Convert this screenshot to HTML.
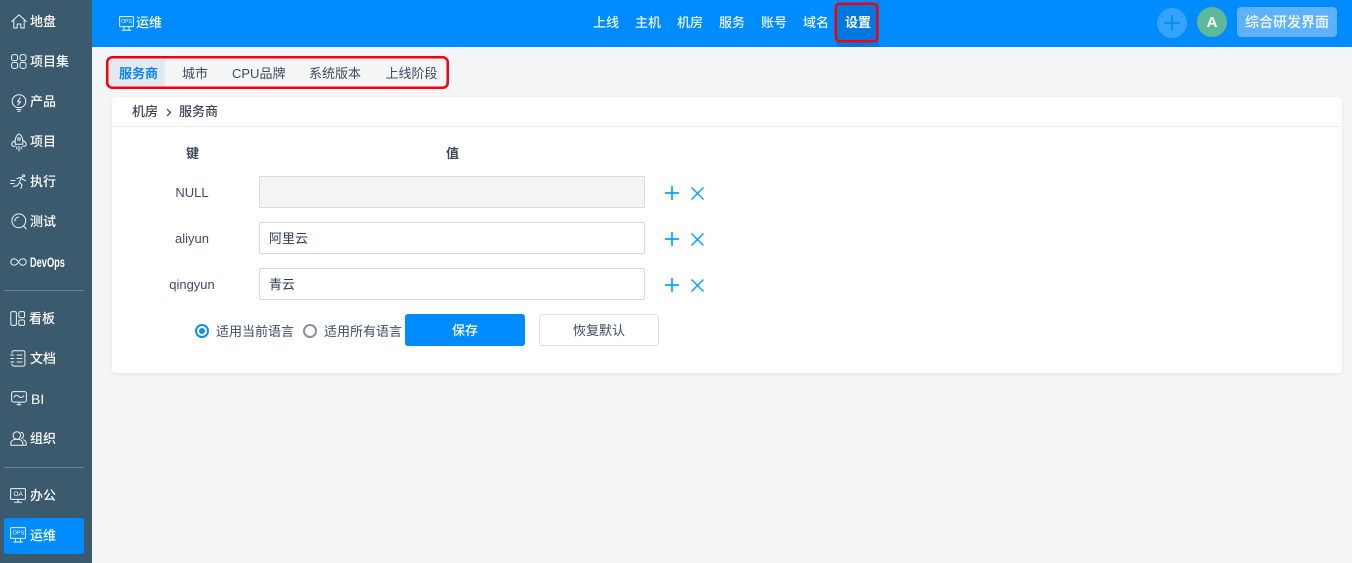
<!DOCTYPE html>
<html lang="zh">
<head>
<meta charset="utf-8">
<style>
html,body{margin:0;padding:0}
body{width:1352px;height:563px;overflow:hidden;position:relative;background:#f3f5f7;font-family:"Liberation Sans","Noto Sans CJK SC",sans-serif;font-size:13px;color:#313c52}
div,span{position:absolute;box-sizing:border-box;white-space:nowrap}
svg{position:absolute;overflow:visible}
.side{left:0;top:0;width:92px;height:563px;background:#3c5a6e}
.sl{left:30px;color:#fff;line-height:20px;height:20px;font-size:13px;font-weight:500}
.sep{left:4px;width:80px;height:1px;background:#6c8296}
.ic{fill:none;stroke:#eef3f6;stroke-width:1;stroke-linecap:round;stroke-linejoin:round}
.top{left:92px;top:0;width:1260px;height:47px;background:#008cff}
.nav{top:13px;line-height:20px;color:#fff;font-size:13px;font-weight:500;opacity:.93}
.tab{top:64px;line-height:20px;font-size:13px;color:#3f4b60}
.lbl{line-height:20px;text-align:center;width:80px;left:152px;color:#3f4b60}
.inp{left:259px;width:386px;height:32px;border:1px solid #d9d9d9;border-radius:2px;background:#fff;padding-left:9px;line-height:32px;color:#313c52}
.rb{top:324px;line-height:16px;font-size:13px;color:#3f4b60}
.act{fill:none;stroke:#00a7ff;stroke-width:1.7}
</style>
</head>
<body>
<div class="side"></div>

<svg class="ic" style="left:11px;top:14px" width="16" height="15" viewBox="0 0 16 15"><path d="M.7 7.500 8 .8l7.300 6.700M2.800 6v8h3.400v-4h3.600v4h3.400V6"/></svg>
<div class="sl" style="top:12px">地盘</div>

<svg class="ic" style="left:11px;top:54px" width="16" height="15" viewBox="0 0 16 15"><rect x=".6" y=".6" width="6" height="6" rx="2"/><rect x="9" y=".6" width="6" height="6" rx="2"/><rect x=".6" y="8.400" width="6" height="6" rx="2"/><rect x="9" y="8.400" width="6" height="6" rx="2"/></svg>
<div class="sl" style="top:52px">项目集</div>

<svg class="ic" style="left:11px;top:94px" width="16" height="18" viewBox="0 0 16 18"><path d="M5.500 13.500C3 12.300 1.200 10.200 1.200 7.300 1.200 3.600 4.200.8 8 .8s6.800 2.800 6.800 6.500c0 2.900-1.800 5-4.300 6.200zM6 15.500h4M6.800 17.300h2.400M9.300 3.800 6.500 7.800h3L6.800 11"/></svg>
<div class="sl" style="top:92px">产品</div>

<svg class="ic" style="left:11px;top:133px" width="16" height="19" viewBox="0 0 16 19"><path d="M8 .8c2.700 1.800 3.800 4.200 3.800 7v3.400H4.200V7.800C4.200 5 5.300 2.600 8 .8zM4.200 7.500C2 8.500.8 10 .8 11.500c0 1 .8 1.700 1.800 1.700h1.600M11.800 7.500c2.200 1 3.400 2.500 3.400 4 0 1-.8 1.700-1.800 1.700h-1.600M8 13.500v4.500M5.800 14v2M10.200 14v2"/><circle cx="8" cy="6" r="1.300"/></svg>
<div class="sl" style="top:132px">项目</div>

<svg class="ic" style="left:10px;top:174px" width="18" height="15" viewBox="0 0 18 15"><circle cx="13.500" cy="1.800" r="1.100"/><path d="M7 4.500 11 3.300l1.800 2.200 3 1.200M11 4 9.500 8.500l2.500 2-1 4M9.500 8.500 7.500 11.500 3.500 12.500M1 6.500h4M.5 9.500h3.500"/></svg>
<div class="sl" style="top:172px">执行</div>

<svg class="ic" style="left:11px;top:213px" width="16" height="17" viewBox="0 0 16 17"><circle cx="7.800" cy="7.800" r="6.900"/><path d="M12.500 12.800 15.200 16M3.800 8a4 4 0 0 1 4-4"/></svg>
<div class="sl" style="top:212px">测试</div>

<svg class="ic" style="left:10px;top:258px" width="17" height="8" viewBox="0 0 17 8"><path d="M8.500 4C7.200 2 5.800.8 4 .8 2.200.8.800 2.200.8 4S2.200 7.200 4 7.200C5.800 7.200 7.200 6 8.500 4c1.300-2 2.700-3.200 4.500-3.200 1.800 0 3.200 1.400 3.200 3.200S14.800 7.200 13 7.200C11.200 7.200 9.800 6 8.500 4z"/></svg>
<div class="sl" style="top:252px;font-size:14px;font-weight:700;transform:scaleX(.66);transform-origin:0 50%">DevOps</div>

<div class="sep" style="top:290px"></div>

<svg class="ic" style="left:10px;top:311px" width="16" height="15" viewBox="0 0 16 15"><rect x=".8" y=".6" width="5.600" height="13.800" rx="1.500"/><rect x="8.800" y=".6" width="5.800" height="6" rx="1.500"/><rect x="8.800" y="9" width="5.800" height="5.400" rx="1.500"/></svg>
<div class="sl" style="top:309px;left:29px">看板</div>

<svg class="ic" style="left:10px;top:350px" width="16" height="17" viewBox="0 0 16 17"><path d="M2 3V2.500C2 1.500 2.800.8 3.800.8h9.400c1 0 1.700.7 1.700 1.700v11.800c0 1-.7 1.800-1.700 1.800H3.800c-1 0-1.800-.8-1.800-1.800V14M.8 5h3M.8 8.500h3M.8 12h3M7 5h5M7 8.500h5M7 12h5"/></svg>
<div class="sl" style="top:349px">文档</div>

<svg class="ic" style="left:11px;top:391px" width="16" height="15" viewBox="0 0 16 15"><rect x=".6" y=".6" width="14.800" height="10.500" rx="2"/><path d="M3 6.300c1.500-2.600 3-2.600 4.800-.9 1.700 1.700 3.200 1.500 5-.6M6 13.800h4M8 11.200v2.600"/></svg>
<div class="sl" style="top:389px;left:31px;font-size:14px;font-weight:400">BI</div>

<svg class="ic" style="left:10px;top:431px" width="17" height="15" viewBox="0 0 17 15"><circle cx="6.800" cy="4.500" r="3.700"/><path d="M.8 14.200v-1.700c0-2.200 1.800-4 4-4h4c2.200 0 4 1.800 4 4v1.700zM10.800 1.200c3 .3 3.800 5 .6 6.300M13.500 8.800c1.700.5 2.700 1.800 2.700 3.500v1.900h-3"/></svg>
<div class="sl" style="top:429px">组织</div>

<div class="sep" style="top:467px"></div>

<svg class="ic" style="left:10px;top:488px" width="16" height="15" viewBox="0 0 16 15"><rect x=".6" y=".6" width="14.800" height="10.800" rx=".5"/><path d="M8 11.500v2.700M4.500 14.200h7"/><text x="3.500" y="8" font-size="6.500" fill="#fff" stroke="none" font-family="Liberation Sans">OA</text></svg>
<div class="sl" style="top:486px">办公</div>

<div style="left:4px;top:518px;width:80px;height:36px;border-radius:2px;background:#008cff"></div>
<svg class="ic" style="left:10px;top:527px" width="16" height="16" viewBox="0 0 16 16"><rect x=".6" y=".6" width="14.800" height="10.800" rx=".5"/><path d="M5.500 11.500v3.500M10.500 11.500v3.500M3.500 15h9"/><text x="2.500" y="7.500" font-size="5.500" fill="#fff" stroke="none" font-family="Liberation Sans">OPS</text></svg>
<div class="sl" style="top:526px">运维</div>

<div class="top"></div>
<svg class="ic" style="left:119px;top:16px" width="15" height="15" viewBox="0 0 15 15"><rect x=".6" y=".6" width="13.800" height="10" rx=".5"/><path d="M5 10.800v3.500M10 10.800v3.500M3.200 14.300h8.600"/><text x="2.300" y="7" font-size="5" fill="#fff" stroke="none" font-family="Liberation Sans">OPS</text></svg>
<div class="nav" style="left:136px;top:13px;opacity:1">运维</div>
<div class="nav" style="left:593px">上线</div>
<div class="nav" style="left:635px">主机</div>
<div class="nav" style="left:677px">机房</div>
<div class="nav" style="left:719px">服务</div>
<div class="nav" style="left:761px">账号</div>
<div class="nav" style="left:803px">域名</div>
<div style="left:837px;top:3px;width:42px;height:44px;background:#0078dc"></div>
<div class="nav" style="left:845px;font-weight:700;opacity:1">设置</div>
<svg style="left:0;top:0" width="1352" height="100"><rect x="835.750" y="3.750" width="41.500" height="37.500" rx="4" fill="none" stroke="#f5000f" stroke-width="2.500"/></svg>

<div style="left:1157px;top:8px;width:30px;height:30px;border-radius:50%;background:#33a3ff"></div>
<svg style="left:1163px;top:14px" width="18" height="18" viewBox="0 0 18 18"><path d="M9 1v16M1 9h16" stroke="#0a8df5" stroke-width="2" fill="none"/></svg>
<div style="left:1197px;top:7px;width:30px;height:30px;border-radius:50%;background:#60b89a;color:#fff;text-align:center;line-height:32px;font-size:15px;font-weight:700">A</div>
<div style="left:1237px;top:7px;width:100px;height:30px;border-radius:4px;background:#5cb2ff;color:#fff;text-align:center;line-height:30px;font-size:14px;font-weight:500">综合研发界面</div>

<div style="left:109px;top:59px;width:56px;height:28px;background:#e3e9f1"></div>
<div class="tab" style="left:119px;color:#0a84f0;font-weight:700">服务商</div>
<div class="tab" style="left:182px">城市</div>
<div class="tab" style="left:232px">CPU品牌</div>
<div class="tab" style="left:309px">系统版本</div>
<div class="tab" style="left:385.500px">上线阶段</div>
<svg style="left:0;top:0" width="1352" height="100"><rect x="107.250" y="57.250" width="340.500" height="30.500" rx="5" fill="none" stroke="#f5000f" stroke-width="2.500"/></svg>

<div style="left:112px;top:97px;width:1230px;height:276px;background:#fff;border-radius:4px;box-shadow:0 1px 3px rgba(0,0,0,.08)"></div>
<div style="left:112px;top:126px;width:1230px;height:1px;background:#eceef1"></div>
<div style="left:132px;top:102px;line-height:20px;font-weight:500;color:#3b4557">机房</div>
<svg style="left:166px;top:108px" width="6" height="9" viewBox="0 0 6 9"><path d="M1 1l3.500 3.500L1 8" fill="none" stroke="#4a5468" stroke-width="1.300"/></svg>
<div style="left:179px;top:102px;line-height:20px;font-weight:500;color:#3b4557">服务商</div>

<div style="left:186px;top:144px;line-height:20px;font-weight:700;color:#3b4557">键</div>
<div style="left:446px;top:144px;line-height:20px;font-weight:700;color:#3b4557">值</div>

<div class="lbl" style="top:183px">NULL</div>
<div class="inp" style="top:176px;background:#f4f4f4"></div>
<div class="lbl" style="top:229px">aliyun</div>
<div class="inp" style="top:222px">阿里云</div>
<div class="lbl" style="top:275px">qingyun</div>
<div class="inp" style="top:268px">青云</div>

<svg class="act" style="left:665px;top:186px" width="14" height="14" viewBox="0 0 14 14"><path d="M7 0v14M0 7h14"/></svg>
<svg class="act" style="left:691px;top:187px;stroke-width:1.500" width="13" height="13" viewBox="0 0 13 13"><path d="M.5.500l12 12M12.500.500l-12 12"/></svg>
<svg class="act" style="left:665px;top:232px" width="14" height="14" viewBox="0 0 14 14"><path d="M7 0v14M0 7h14"/></svg>
<svg class="act" style="left:691px;top:233px;stroke-width:1.500" width="13" height="13" viewBox="0 0 13 13"><path d="M.5.500l12 12M12.500.500l-12 12"/></svg>
<svg class="act" style="left:665px;top:278px" width="14" height="14" viewBox="0 0 14 14"><path d="M7 0v14M0 7h14"/></svg>
<svg class="act" style="left:691px;top:279px;stroke-width:1.500" width="13" height="13" viewBox="0 0 13 13"><path d="M.5.500l12 12M12.500.500l-12 12"/></svg>

<div style="left:195px;top:324px;width:14px;height:14px;border-radius:50%;border:2px solid #0a8df5"></div>
<div style="left:199px;top:328px;width:6px;height:6px;border-radius:50%;background:#0a8df5"></div>
<div class="rb" style="left:216px">适用当前语言</div>
<div style="left:303px;top:324px;width:14px;height:14px;border-radius:50%;border:2px solid #8b8f9e"></div>
<div class="rb" style="left:324px">适用所有语言</div>

<div style="left:405px;top:314px;width:120px;height:32px;border-radius:3px;background:#008cff;color:#fff;text-align:center;line-height:33px;font-weight:500">保存</div>
<div style="left:539px;top:314px;width:120px;height:32px;border-radius:3px;background:#fff;border:1px solid #dcdfe3;color:#3f4b60;text-align:center;line-height:31px">恢复默认</div>
</body>
</html>
